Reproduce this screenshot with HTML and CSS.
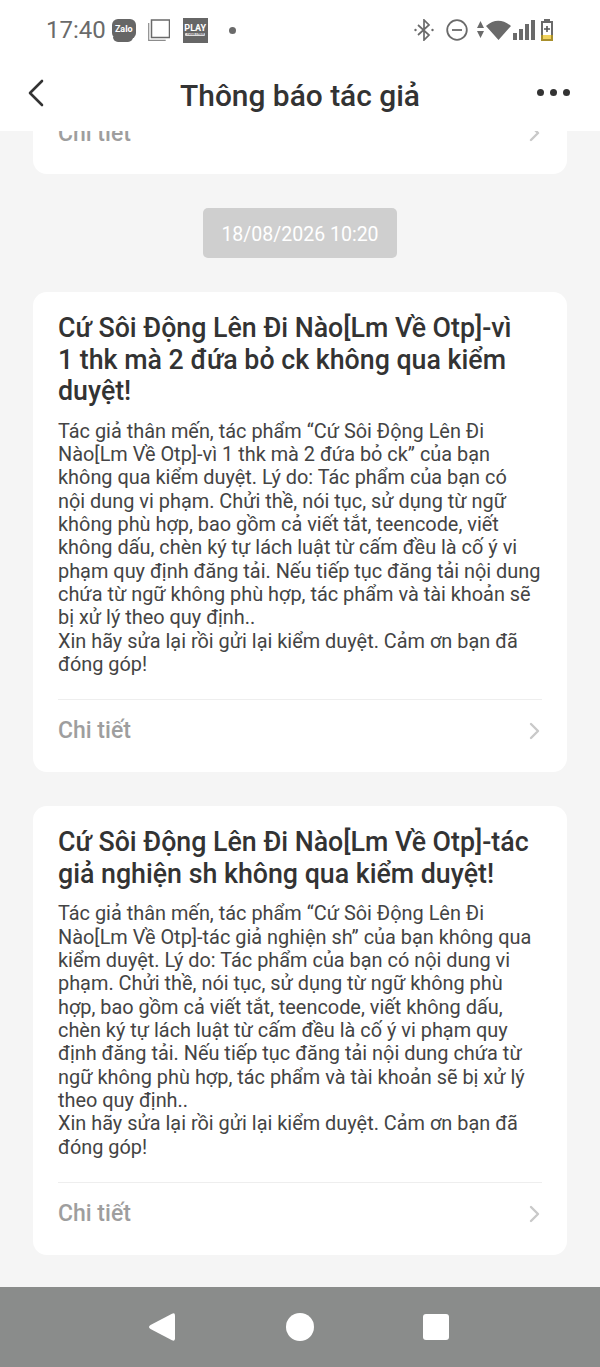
FILE: index.html
```html
<!DOCTYPE html>
<html lang="vi">
  <head>
    <meta charset="UTF-8" />
    <meta name="viewport" content="width=device-width, initial-scale=1.0" />
    <title>Thông báo tác giả</title>
    <link rel="stylesheet" href="styles.css">
  </head>
  <body>
    <div class="phone">
      <div class="status-bar">
        <div class="status-left">
          <span class="clock">17:40</span>
          <span class="zalo">Zalo</span>
          <svg class="copy-icon" width="22" height="22" viewBox="0 0 22 22" fill="none" stroke="#6a6a6a">
            <rect x="3.500" y="1" width="18" height="17.500" stroke-width="1.500" />
            <path d="M.7 4v17.300h17" stroke-width="1.200" stroke="#8c8c8c" />
          </svg>
          <span class="play"><b>PLAY</b><i>TOGETHER</i></span>
          <span class="dot"></span>
        </div>
        <div class="status-right">
          <svg width="20" height="22" viewBox="0 0 20 22" fill="none" stroke="#6a6a6a" stroke-width="1.700">
            <path d="M4 6l11 10-5 5V1l5 5L4 16" />
            <circle cx="1.500" cy="11" r="1.200" fill="#6a6a6a" stroke="none" />
            <circle cx="18.500" cy="11" r="1.200" fill="#6a6a6a" stroke="none" />
          </svg>
          <svg class="dnd" width="22" height="22" viewBox="0 0 22 22" fill="none" stroke="#6a6a6a" stroke-width="1.800">
            <circle cx="11" cy="11" r="9.800" />
            <path d="M6 11h10" />
          </svg>
          <svg class="wifi" width="35" height="22" viewBox="0 0 35 22" fill="#6a6a6a">
            <path d="M3.500 2l3.500 7H0zM3.500 19L7 12H0zM9 7Q21-3.500 34 7L21.500 21z" />
          </svg>
          <svg class="signal" width="22" height="20" viewBox="0 0 22 20" fill="#6a6a6a">
            <path d="M0 13h4v7H0zM6 9h4v11H6zM12 4h4v16h-4zM18 0h4v20h-4z" />
          </svg>
          <svg class="battery" width="14" height="22" viewBox="0 0 14 22">
            <path d="M4 0h6v2h3v20H1V2h3z" fill="#6a6a6a" />
            <path d="M3 4h8v12H3z" fill="#fff" />
            <path d="M3 16h8v4H3z" fill="#f1d35e" />
            <path d="M1 16h2v6H1zM11 16h2v6h-2zM1 20h12v2H1z" fill="#a88f2c" />
            <path d="M6.200 7h1.600v2.200H10v1.600H7.800V13H6.200v-2.200H4V9.200h2.200z" fill="#555" />
          </svg>
        </div>
      </div>

      <header class="app-bar">
        <svg class="back" width="18" height="28" viewBox="0 0 18 28" fill="none" stroke="#333" stroke-width="2.600" stroke-linecap="round" stroke-linejoin="round">
          <path d="M15 2L3 14l12 12" />
        </svg>
        <h1>Thông báo tác giả</h1>
        <div class="more"><span></span><span></span><span></span></div>
      </header>

      <main class="feed">
        <section class="card card-cut">
          <a class="detail">
            <span>Chi tiết</span>
            <svg width="12" height="18" viewBox="0 0 12 18" fill="none" stroke="#c9c9c9" stroke-width="2.400" stroke-linecap="round" stroke-linejoin="round"><path d="M2 2l7 7-7 7" /></svg>
          </a>
        </section>

        <div class="date">18/08/2026 10:20</div>

        <section class="card">
          <h2>Cứ Sôi Động Lên Đi Nào[Lm Về Otp]-vì<br>1 thk mà 2 đứa bỏ ck không qua kiểm<br>duyệt!</h2>
          <p>Tác giả thân mến, tác phẩm “Cứ Sôi Động Lên Đi<br>Nào[Lm Về Otp]-vì 1 thk mà 2 đứa bỏ ck” của bạn<br>không qua kiểm duyệt. Lý do: Tác phẩm của bạn có<br>nội dung vi phạm. Chửi thề, nói tục, sử dụng từ ngữ<br>không phù hợp, bao gồm cả viết tắt, teencode, viết<br>không dấu, chèn ký tự lách luật từ cấm đều là cố ý vi<br>phạm quy định đăng tải. Nếu tiếp tục đăng tải nội dung<br>chứa từ ngữ không phù hợp, tác phẩm và tài khoản sẽ<br>bị xử lý theo quy định..<br>Xin hãy sửa lại rồi gửi lại kiểm duyệt. Cảm ơn bạn đã<br>đóng góp!</p>
          <a class="detail">
            <span>Chi tiết</span>
            <svg width="12" height="18" viewBox="0 0 12 18" fill="none" stroke="#c9c9c9" stroke-width="2.400" stroke-linecap="round" stroke-linejoin="round"><path d="M2 2l7 7-7 7" /></svg>
          </a>
        </section>

        <section class="card">
          <h2>Cứ Sôi Động Lên Đi Nào[Lm Về Otp]-tác<br>giả nghiện sh không qua kiểm duyệt!</h2>
          <p>Tác giả thân mến, tác phẩm “Cứ Sôi Động Lên Đi<br>Nào[Lm Về Otp]-tác giả nghiện sh” của bạn không qua<br>kiểm duyệt. Lý do: Tác phẩm của bạn có nội dung vi<br>phạm. Chửi thề, nói tục, sử dụng từ ngữ không phù<br>hợp, bao gồm cả viết tắt, teencode, viết không dấu,<br>chèn ký tự lách luật từ cấm đều là cố ý vi phạm quy<br>định đăng tải. Nếu tiếp tục đăng tải nội dung chứa từ<br>ngữ không phù hợp, tác phẩm và tài khoản sẽ bị xử lý<br>theo quy định..<br>Xin hãy sửa lại rồi gửi lại kiểm duyệt. Cảm ơn bạn đã<br>đóng góp!</p>
          <a class="detail">
            <span>Chi tiết</span>
            <svg width="12" height="18" viewBox="0 0 12 18" fill="none" stroke="#c9c9c9" stroke-width="2.400" stroke-linecap="round" stroke-linejoin="round"><path d="M2 2l7 7-7 7" /></svg>
          </a>
        </section>
      </main>

      <nav class="nav-bar">
        <svg class="nav-back" width="26" height="28" viewBox="0 0 26 28" fill="#fff"><path d="M23 .8Q26-.6 26 2.500v23q0 3.100-3 1.700L1.500 16q-3-2 0-4z" /></svg>
        <span class="nav-home"></span>
        <span class="nav-square"></span>
      </nav>
    </div>
  </body>
</html>
```

FILE: styles.css
```css
* {
  box-sizing: border-box;
}

body {
  margin: 0;
  font-family: Roboto, "Noto Sans", sans-serif;
  background-color: #f5f5f5;
}

.phone {
  width: 600px;
  height: 1367px;
  display: flex;
  flex-direction: column;
  overflow: hidden;
}

.status-bar {
  height: 62px;
  padding: 0 46px 2px 46px;
  background-color: #fff;
  display: flex;
  justify-content: space-between;
  align-items: center;
  flex-shrink: 0;
}

.status-left,
.status-right {
  display: flex;
  align-items: center;
}

.clock {
  font-size: 24px;
  color: #6a6a6a;
  margin-right: 6px;
}

.zalo {
  position: relative;
  width: 24px;
  height: 20px;
  border-radius: 6px;
  background-color: #666;
  color: #fff;
  font-size: 9px;
  font-weight: 700;
  line-height: 20px;
  text-align: center;
  margin-right: 12px;
  margin-bottom: 2px;
}

.zalo::after {
  content: "";
  position: absolute;
  left: 1px;
  right: 3px;
  bottom: -3px;
  height: 5px;
  border-radius: 0 0 8px 8px;
  background-color: #666;
}

.copy-icon {
  margin-right: 13px;
}

.play {
  width: 25px;
  height: 25px;
  background-color: #666;
  color: #fff;
  display: flex;
  flex-direction: column;
  align-items: center;
  justify-content: center;
  line-height: 1;
  margin-right: 21px;
}

.play b {
  font-size: 9px;
}

.play i {
  padding: 0 1px;
  border-radius: 1px;
  background-color: #ddd;
  color: #666;
  font-size: 3.500px;
  font-style: normal;
  font-weight: 700;
}

.dot {
  width: 7px;
  height: 7px;
  border-radius: 50%;
  background-color: #6a6a6a;
}

.dnd {
  margin-left: 12px;
}

.wifi {
  margin-left: 9px;
}

.signal {
  margin-left: 1px;
}

.battery {
  margin-left: 5px;
}

.app-bar {
  height: 69px;
  padding: 0 27px 3px;
  background-color: #fff;
  display: grid;
  grid-template-columns: 1fr auto 1fr;
  align-items: center;
  flex-shrink: 0;
  position: relative;
  z-index: 1;
}

.back {
  margin-bottom: 5px;
}

.app-bar h1 {
  margin: 0;
  font-size: 29.900px;
  font-weight: 500;
  color: #333;
}

.more {
  display: flex;
  gap: 6px;
  justify-self: end;
  margin-right: 3px;
  padding-bottom: 6px;
}

.more span {
  width: 7px;
  height: 7px;
  border-radius: 50%;
  background-color: #333;
}

.feed {
  flex: 1;
  padding: 0 33px;
  overflow: hidden;
}

.card {
  background-color: #fff;
  border-radius: 14px;
  padding: 21px 25px 0;
  margin-bottom: 34px;
}

.card-cut {
  height: 43px;
  padding-top: 0;
  border-radius: 0 0 14px 14px;
}

.card-cut .detail {
  border-top: 0;
  height: 4px;
  padding-bottom: 0;
}

.card h2 {
  margin: 0 0 12px;
  font-size: 26.750px;
  font-weight: 500;
  line-height: 31.500px;
  color: #333;
}

.card p {
  margin: 0 0 23px;
  font-size: 19.900px;
  line-height: 23.350px;
  color: #444;
}

.detail {
  height: 73px;
  border-top: 1px solid #eee;
  padding-bottom: 11px;
  display: flex;
  justify-content: space-between;
  align-items: center;
  font-size: 23px;
  font-weight: 500;
  color: #9e9e9e;
}

.detail svg {
  margin-right: 1px;
}

.date {
  width: 194px;
  height: 50px;
  margin: 0 auto 34px;
  background-color: #cfcfcf;
  border-radius: 5px;
  color: #fff;
  font-size: 19.500px;
  line-height: 53px;
  text-align: center;
}

.nav-bar {
  height: 80px;
  flex-shrink: 0;
  background-color: #8a8c8b;
  display: flex;
  justify-content: center;
  align-items: center;
  padding-right: 2px;
}

.nav-back {
  margin-right: 111px;
}

.nav-home {
  width: 28px;
  height: 28px;
  border-radius: 50%;
  background-color: #fff;
  margin-right: 109px;
}

.nav-square {
  width: 26px;
  height: 26px;
  border-radius: 3px;
  background-color: #fff;
}
```
